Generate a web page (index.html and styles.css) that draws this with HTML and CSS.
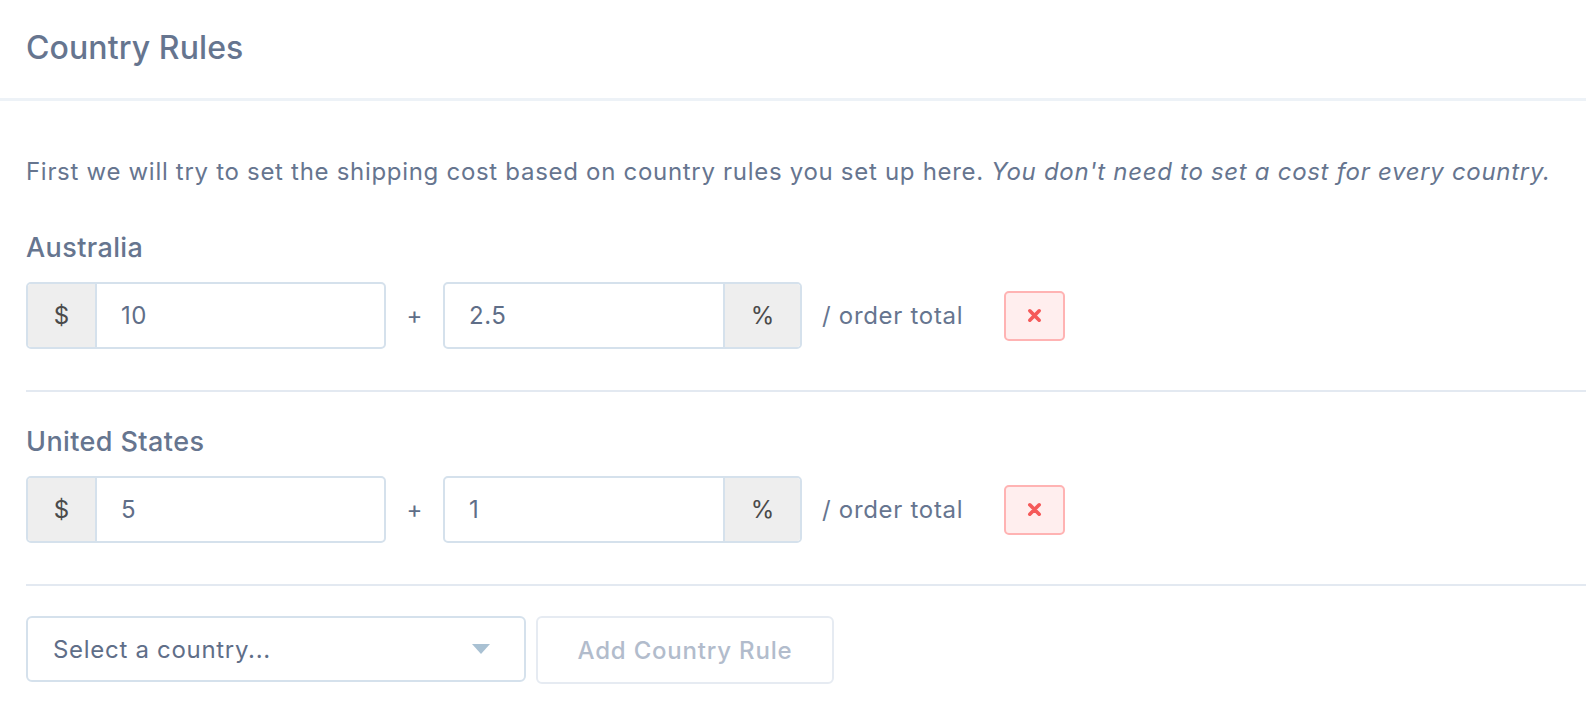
FILE: index.html
```html
<!DOCTYPE html>
<html>
<head>
<meta charset="utf-8">
<link rel="stylesheet" href="styles.css">
</head>
<body>
<div class="header"><h1 class="title">Country Rules</h1></div>
<div class="content">
  <p class="intro">First we will try to set the shipping cost based on country rules you set up here. <em>You don't need to set a cost for every country.</em></p>

  <div class="rule">
    <div class="rule-label">Australia</div>
    <div class="rule-row">
      <div class="group group-fixed">
        <span class="addon addon-left">$</span>
        <span class="field">10</span>
      </div>
      <span class="plus">+</span>
      <div class="group group-pct">
        <span class="field">2.5</span>
        <span class="addon addon-right">%</span>
      </div>
      <span class="per">/ order total</span>
      <button class="remove" type="button"><svg width="15" height="15" viewBox="0 0 15 15"><path d="M2.8 2.8 L12.2 12.2 M12.2 2.8 L2.8 12.2" stroke="#f55a5a" stroke-width="3.6" stroke-linecap="round"/></svg></button>
    </div>
  </div>

  <div class="rule">
    <div class="rule-label">United States</div>
    <div class="rule-row">
      <div class="group group-fixed">
        <span class="addon addon-left">$</span>
        <span class="field">5</span>
      </div>
      <span class="plus">+</span>
      <div class="group group-pct">
        <span class="field">1</span>
        <span class="addon addon-right">%</span>
      </div>
      <span class="per">/ order total</span>
      <button class="remove" type="button"><svg width="15" height="15" viewBox="0 0 15 15"><path d="M2.8 2.8 L12.2 12.2 M12.2 2.8 L2.8 12.2" stroke="#f55a5a" stroke-width="3.6" stroke-linecap="round"/></svg></button>
    </div>
  </div>

  <div class="add-row">
    <div class="select"><span>Select a country...</span><svg class="caret" width="18" height="10" viewBox="0 0 18 10"><path d="M0 0 H18 L9 10 Z" fill="#a9c1d3"/></svg></div>
    <button class="add-btn" type="button">Add Country Rule</button>
  </div>
</div>
</body>
</html>
```

FILE: styles.css
```css
html, body {
  margin: 0;
  padding: 0;
  background: #ffffff;
  font-family: Inter, "Noto Sans", "Liberation Sans", sans-serif;
  color: #667592;
}

.header {
  height: 98px;
  display: flex;
  align-items: center;
  padding: 0 26px;
  border-bottom: 3px solid #edf2f7;
}

.title {
  margin: -4px 0 0;
  font-size: 32px;
  font-weight: 500;
  color: #66758f;
  letter-spacing: 0.1px;
}

.content {
  padding-left: 26px;
}

.intro {
  margin: 56px 0 0;
  font-size: 24px;
  line-height: 30px;
  letter-spacing: 0.7px;
  color: #66758f;
}

.intro em {
  font-style: italic;
}

.rule {
  padding-bottom: 41px;
  border-bottom: 2px solid #e3e9f1;
}

.rule:first-of-type {
  margin-top: 47px;
}

.rule + .rule {
  padding-top: 36px;
}

.rule-label {
  font-size: 27px;
  line-height: 28px;
  letter-spacing: 0.4px;
  font-weight: 500;
  color: #66758f;
  margin-bottom: 20px;
}

.rule-row {
  display: flex;
  align-items: center;
  height: 67px;
}

.group {
  display: flex;
  height: 67px;
  box-sizing: border-box;
  border: 2px solid #d5e1ec;
  border-radius: 5px;
  overflow: hidden;
  flex-shrink: 0;
}

.group-fixed { width: 360px; }
.group-pct { width: 359px; }

.addon {
  background: #eeeeee;
  color: #4a4a4a;
  font-size: 24px;
  display: flex;
  align-items: center;
  justify-content: center;
  flex-shrink: 0;
}

.addon-left {
  width: 67px;
  border-right: 2px solid #d5e1ec;
}

.addon-right {
  width: 75px;
  border-left: 2px solid #d5e1ec;
}

.field {
  flex: 1;
  display: flex;
  align-items: center;
  padding-left: 24px;
  font-size: 24px;
  letter-spacing: 0.5px;
  color: #5f6e88;
}

.plus {
  width: 57px;
  flex-shrink: 0;
  text-align: center;
  font-size: 24px;
  color: #5f6e88;
}

.per {
  margin-left: 20px;
  font-size: 24px;
  letter-spacing: 0.7px;
  color: #66758f;
}

.remove {
  margin-left: 41px;
  width: 61px;
  height: 50px;
  box-sizing: border-box;
  background: #ffeeee;
  border: 2px solid #ffb3b3;
  border-radius: 5px;
  display: flex;
  align-items: center;
  justify-content: center;
  padding: 0;
  flex-shrink: 0;
}

.add-row {
  display: flex;
  gap: 10px;
  margin-top: 30px;
  align-items: flex-start;
}

.select {
  width: 500px;
  height: 66px;
  box-sizing: border-box;
  border: 2px solid #d5e1ec;
  border-radius: 6px;
  display: flex;
  align-items: center;
  justify-content: space-between;
  padding: 0 34px 0 25px;
  font-size: 24px;
  letter-spacing: 0.7px;
  color: #5f6e88;
}

.add-btn {
  width: 298px;
  height: 68px;
  box-sizing: border-box;
  background: #ffffff;
  border: 2px solid #e6ebf2;
  border-radius: 6px;
  font-family: inherit;
  font-size: 24px;
  letter-spacing: 0.8px;
  font-weight: 500;
  color: #b2bccc;
}
```
